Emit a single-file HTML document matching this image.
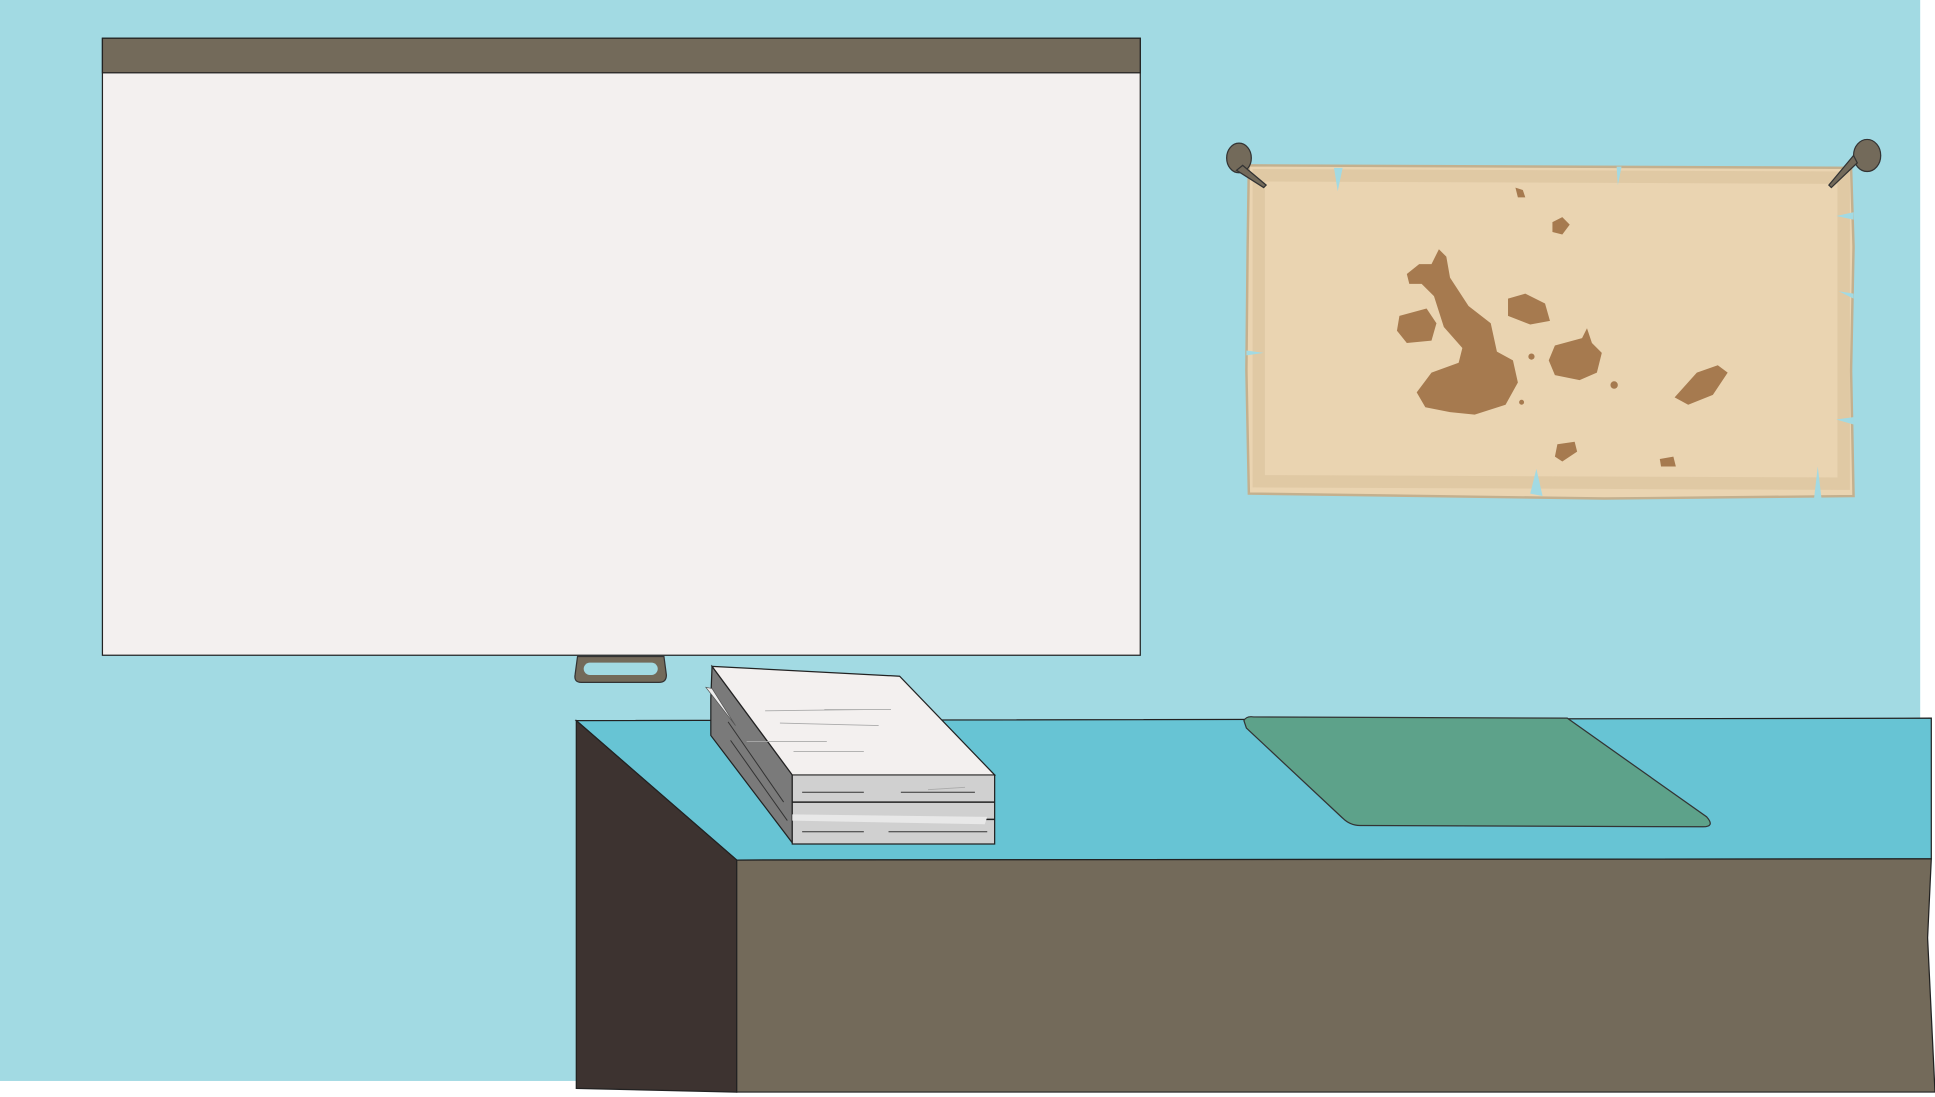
<!DOCTYPE html>
<html><head><style>html,body{margin:0;padding:0;background:#fff;overflow:hidden}svg{display:block}</style></head>
<body>
<svg width="1935" height="1097" viewBox="0 0 1568 889" preserveAspectRatio="none" xmlns="http://www.w3.org/2000/svg">
<rect width="1568" height="889" fill="#fff"/>
<rect x="0" y="0" width="1556" height="876" fill="#A2DAE3"/>
<!-- whiteboard -->
<rect x="83" y="31" width="841" height="500" fill="#F3F0EF" stroke="#222" stroke-width="1"/>
<rect x="83" y="31" width="841" height="28" fill="#736A5A" stroke="#222" stroke-width="1"/>
<path d="M468 532 L538 532 L540 547 Q540 553 534 553 L471 553 Q465 553 466 547 Z" fill="#736A5A" stroke="#333" stroke-width="1"/>
<rect x="473" y="537" width="60" height="10" rx="5" fill="#A2DAE3"/>
<!-- map -->
<path d="M1012 134 L1500 136 L1502 200 L1500 300 L1502 402 L1300 404 L1012 400 L1010 300 L1011 200 Z" fill="#EAD4B1" stroke="#C4B08E" stroke-width="2"/>
<path d="M1020 142 L1494 144 L1494 392 L1020 390 Z" fill="none" stroke="#D6BE98" stroke-width="10" opacity="0.5"/>
<path d="M1240 400 L1245 380 L1250 402 Z M1470 404 L1473 378 L1476 404 Z M1081 136 L1084 155 L1088 136 Z M1310 135 L1311 150 L1314 135 Z M1488 175 L1502 172 L1502 178 Z M1490 236 L1502 238 L1502 242 Z M1488 340 L1502 338 L1502 344 Z M1010 284 L1024 286 L1010 288 Z" fill="#A2DAE3"/>
<g fill="#A67A4F">
<path d="M1140 222 L1150 214 L1160 214 L1166 202 L1172 208 L1175 225 L1190 248 L1208 262 L1213 285 L1226 292 L1230 310 L1220 328 L1195 336 L1175 334 L1155 330 L1148 318 L1160 302 L1182 294 L1185 282 L1170 265 L1162 240 L1152 230 L1142 230 Z"/>
<path d="M1134 256 L1156 250 L1164 262 L1160 276 L1140 278 L1132 268 Z"/>
<path d="M1222 242 L1236 238 L1252 246 L1256 260 L1240 263 L1222 256 Z"/>
<path d="M1260 280 L1282 274 L1286 266 L1290 278 L1298 286 L1294 302 L1280 308 L1260 304 L1255 292 Z"/>
<path d="M1375 302 L1392 296 L1400 302 L1388 320 L1368 328 L1357 322 Z"/>
<path d="M1258 180 L1266 176 L1272 182 L1266 190 L1258 188 Z"/>
<path d="M1228 152 L1234 154 L1236 160 L1230 160 Z"/>
<path d="M1262 360 L1276 358 L1278 366 L1266 374 L1260 370 Z"/>
<path d="M1345 372 L1356 370 L1358 378 L1346 378 Z"/>
<circle cx="1241" cy="289" r="2.5"/><circle cx="1308" cy="312" r="3"/><circle cx="1233" cy="326" r="2"/>
</g>
<!-- pins -->
<ellipse cx="1004" cy="128" rx="10" ry="12" fill="#736A5A" stroke="#333"/>
<path d="M1007 134 L1026 150 L1024 152 L1002 138 Z" fill="#736A5A" stroke="#333" stroke-width="1"/>
<ellipse cx="1513" cy="126" rx="11" ry="13" fill="#736A5A" stroke="#333"/>
<path d="M1505 132 L1484 152 L1482 150 L1502 126 Z" fill="#736A5A" stroke="#333" stroke-width="1"/>
<!-- desk -->
<path d="M467 584 L1565 582 L1565 696 L597 697 Z" fill="#67C4D4" stroke="#222" stroke-width="1"/>
<path d="M467 584 L597 697 L597 885 L467 882 Z" fill="#3D3330" stroke="#222" stroke-width="1"/>
<path d="M597 697 L1565 696 L1562 760 L1568 885 L597 885 Z" fill="#736A5A" stroke="#222" stroke-width="1"/>
<path d="M1008 584 Q1010 580 1016 581 L1270 582 L1383 662 Q1390 670 1380 670 L1102 669 Q1094 669 1088 663 L1010 590 Z" fill="#5DA28A" stroke="#333" stroke-width="1"/>
<!-- papers -->
<path d="M576 566 L577 540 L642 628 L642 683 L576 596 Z" fill="#7A7A7A" stroke="#222" stroke-width="1"/>
<path d="M642 628 L806 628 L806 684 L642 684 Z" fill="#D0D0D0" stroke="#222" stroke-width="1"/>
<path d="M642 650 L806 650 M642 664 L806 664" stroke="#222" stroke-width="1.2"/>
<path d="M642 660 L800 662 L798 668 L642 665 Z" fill="#E8E8E8"/>
<path d="M572 557 L577 558 L596 588 Z" fill="#EEE" stroke="#555" stroke-width="0.6"/>
<path d="M577 540 L729 548 L806 628 L642 628 Z" fill="#F3F0EF" stroke="#222" stroke-width="1"/>
<g stroke="#AAA" stroke-width="0.7">
<path d="M620 576 L700 575 M632 586 L712 588 M605 601 L670 601 M643 609 L700 609 M668 575 L722 575 M752 640 L782 638"/>
</g>
<g stroke="#333" stroke-width="0.8">
<path d="M650 642 L700 642 M730 642 L790 642 M650 674 L700 674 M720 674 L800 674 M590 585 L635 650 M592 600 L638 665"/>
</g>
</svg>
</body></html>
